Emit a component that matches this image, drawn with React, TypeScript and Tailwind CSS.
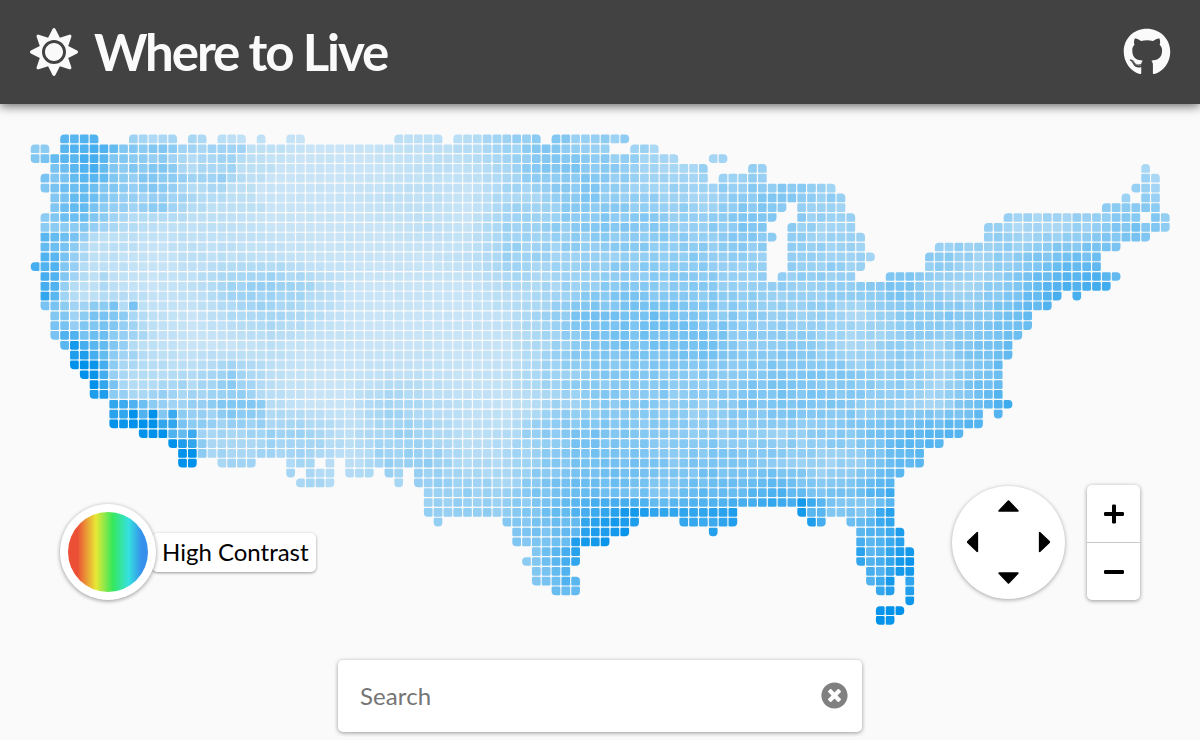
import { FaGithub, FaSun, FaTimesCircle } from "react-icons/fa";

const PITCH = 1140 / 116;
const CELL = 8.7;

/** Column spans that hold land, one entry per grid row. */
const LAND = [
  "3-6 10-14 16-17 19-21 23 26-27 37-41 43-51 53-60",
  "0-1 3-58 61-63",
  "0-65 69-70",
  "2-68 73-74 113",
  "1-68 70-74 113-114",
  "1-81 112-114",
  "2-82 111 113-114",
  "2-76 78-82 109-114",
  "1-75 78-83 99-112 114-115",
  "1-74 77-83 97-115",
  "1-75 77-84 97-113",
  "1-74 77-84 92-110",
  "1-74 77-85 91-108",
  "0-74 77-84 91-108",
  "1-74 76-83 87-110",
  "1-109",
  "1-104 106",
  "1-103",
  "2-101",
  "2-101",
  "2-100",
  "3-99",
  "4-99",
  "4-98",
  "5-98",
  "6-98",
  "6-98",
  "8-99",
  "8-96 98",
  "8-96",
  "11-94",
  "14-92",
  "15-90",
  "15-16 19-22 26-28 30 32-90",
  "26 28-30 32-34 36-37 39-88",
  "27-30 37 39-87",
  "40-87",
  "40-87",
  "40-71 78-87",
  "41 48-61 66-71 79-80 83-87",
  "49-60 69 84-88",
  "49-58 84-88",
  "51-55 84-89",
  "50-55 84-89",
  "51-54 85-89",
  "51-55 85-87 89",
  "53-55 86-87 89",
  "89",
  "86-88",
  "86-87",
];

/** Price samples in base 36 (0 cheapest, k dearest), every 4 columns and 3 rows. */
const SAMPLES = [
  "7c7331100112475533344444444433",
  "8b6631000011377534554444444433",
  "9a5520000110347554675555555655",
  "982111000010456765764444633586",
  "c71011100001445566555456468988",
  "d9101453000023576655568448cdcc",
  "96610242000014889765536769cccc",
  "ad81001000000378896653548acccc",
  "kk62251001101467767876648bcccc",
  "fff5462004210357657876549fffff",
  "iiii634414412687666567accccccc",
  "iiiii43315523688778645aacccccc",
  "iiiii433335548a97aac79ffffffff",
  "iiiii433335568bhgehgcaghhhhhhh",
  "iiiii433335578diiiiiiceiiiiiii",
  "iiiii433335578biiiiiiceiiiiiii",
  "iiiii433335578biiiiiikkkkkkkkk",
  "iiiii433335578biiiiiikkkkkkkkk",
];

/** Exact values where prices change too sharply to interpolate: row, first column, values. */
const EXACT: [number, number, string][] = [
  [0, 3, "bbcc"],
  [1, 0, "66"], [1, 3, "bccdca77677644344441111"],
  [2, 0, "78abbddb7766564323344211"],
  [3, 2, "89bcda76767763233341111"],
  [4, 1, "878abba7657766544453211"],
  [5, 1, "7899a977656765322331110"],
  [6, 2, "78aa97655455443222111"],
  [7, 2, "79aa865545664322111111"],
  [8, 1, "6799976432222221111"],
  [9, 1, "6666754322"],
  [10, 1, "ba985211"],
  [11, 1, "a986311"],
  [12, 1, "cb85311"],
  [13, 0, "dcc75211"],
  [14, 1, "dc7421"],
  [15, 1, "dc5211"],
  [16, 1, "fb421122"],
  [17, 1, "88644668281"],
  [18, 2, "77468876321"],
  [19, 2, "88577875421"],
  [20, 2, "8cc899654"],
  [21, 3, "bidba7521"],
  [22, 4, "hhda6442"],
  [23, 4, "kkjd6332"],
  [24, 5, "kjd53222"],
  [25, 6, "kf832223342"],
  [26, 6, "hh653345434"],
  [27, 8, "fec9654455677776"],
  [28, 8, "gfkck7e655467665"],
  [29, 8, "kjkkkff866545545"],
  [30, 11, "kkkcae434334"],
  [31, 14, "khf63333"],
  [32, 15, "kk634333"],
  [33, 15, "kk"], [33, 19, "3444"],
  [37, 52, "89abcdddddcaabbccccdddefedc"],
  [38, 52, "9aacdefgiihffffffgghhhh"],
  [37, 78, "ieb877779bcih"],
  [38, 78, "ibb77879eg"],
  [39, 56, "fghihh"], [39, 79, "hd"], [39, 83, "9abefg"],
  [40, 56, "ghhij"], [40, 84, "bcceh"],
  [41, 55, "hiij"], [41, 84, "dbceg"],
  [42, 51, "79bdg"], [42, 84, "gbcfhi"],
  [43, 50, "679bdf"], [43, 84, "fcdfij"],
  [44, 51, "78ac"], [44, 85, "dcfii"],
  [45, 51, "789cb"], [45, 85, "cei"],
];

const isLand: boolean[][] = LAND.map((row) => {
  const cells: boolean[] = new Array(116).fill(false);
  row.split(" ").forEach((span) => {
    const [from, to = from] = span.split("-").map(Number);
    cells.fill(true, from, to + 1);
  });
  return cells;
});

const land = (r: number, c: number) => Boolean(isLand[r]?.[c]);

const exact = new Map<string, number>();
EXACT.forEach(([r, c, values]) => {
  [...values].forEach((v, i) => exact.set(`${r},${c + i}`, parseInt(v, 36)));
});

function price(r: number, c: number): number {
  const fixed = exact.get(`${r},${c}`);
  if (fixed !== undefined) return fixed / 20;
  const y = r / 3;
  const x = c / 4;
  const j = Math.floor(y);
  const k = Math.floor(x);
  const at = (jj: number, kk: number) =>
    parseInt(SAMPLES[jj][Math.min(kk, 29)], 36);
  const top = at(j, k) * (1 - (x - k)) + at(j, k + 1) * (x - k);
  const bottom = at(j + 1, k) * (1 - (x - k)) + at(j + 1, k + 1) * (x - k);
  const base = top * (1 - (y - j)) + bottom * (y - j);
  const n = Math.sin(r * 127.1 + c * 311.7) * 43758.5453;
  const noise = (n - Math.floor(n) - 0.5) * Math.min(1.8, 0.3 + base * 0.35);
  return Math.max(0, Math.min(1, (base + noise) / 20));
}

function shade(t: number): string {
  const mix = (a: number, b: number) => Math.round(a + (b - a) * t);
  return `rgb(${mix(200, 0)},${mix(228, 145)},${mix(246, 234)})`;
}

/** A rounded cell; corners on the outline of the country get the larger radius. */
function cellPath(r: number, c: number): string {
  const x = c * PITCH + 0.75;
  const y = r * PITCH + 0.55;
  const n = land(r - 1, c);
  const s = land(r + 1, c);
  const w = land(r, c - 1);
  const e = land(r, c + 1);
  const rad = (a: boolean, b: boolean) => (!a && !b ? 4 : 1.3);
  const tl = rad(n, w);
  const tr = rad(n, e);
  const br = rad(s, e);
  const bl = rad(s, w);
  return (
    `M${x + tl} ${y}H${x + CELL - tr}a${tr} ${tr} 0 0 1 ${tr} ${tr}` +
    `V${y + CELL - br}a${br} ${br} 0 0 1 ${-br} ${br}` +
    `H${x + bl}a${bl} ${bl} 0 0 1 ${-bl} ${-bl}` +
    `V${y + tl}a${tl} ${tl} 0 0 1 ${tl} ${-tl}Z`
  );
}

function PriceMap() {
  return (
    <svg width="1140" height="492" viewBox="0 0 1140 492" className="block">
      {isLand.map((row, r) =>
        row.map((filled, c) =>
          filled ? (
            <path key={`${r}-${c}`} d={cellPath(r, c)} fill={shade(price(r, c))} />
          ) : null,
        ),
      )}
    </svg>
  );
}

function Caret({ className, label }: { className: string; label: string }) {
  return (
    <button aria-label={label} className="flex items-center justify-center">
      <svg width="21" height="12" viewBox="0 0 21 12" className={className}>
        <path d="M10.5 1.2L19.8 10.9H1.2Z" stroke="black" strokeWidth="1.8" strokeLinejoin="round" />
      </svg>
    </button>
  );
}

function PanPad() {
  return (
    <div className="grid size-[113px] grid-cols-[36px_36px_36px] grid-rows-[36px_36px_36px] place-content-center rounded-full bg-white pb-px shadow-[0_1px_4px_rgba(0,0,0,0.35)]">
      <span />
      <Caret label="Up" className="" />
      <span />
      <Caret label="Left" className="-rotate-90" />
      <span />
      <Caret label="Right" className="rotate-90" />
      <span />
      <Caret label="Down" className="rotate-180" />
      <span />
    </div>
  );
}

function ZoomButtons() {
  return (
    <div className="flex h-[115px] w-[53px] flex-col rounded-[5px] bg-white shadow-[0_1px_4px_rgba(0,0,0,0.4)]">
      <button aria-label="Zoom in" className="flex flex-1 items-center justify-center border-b border-[#c8c8c8]">
        <svg width="20" height="20" viewBox="0 0 20 20">
          <rect x="0" y="8" width="20" height="4" rx="1.2" />
          <rect x="8" y="0.5" width="4" height="19" rx="1.2" />
        </svg>
      </button>
      <button aria-label="Zoom out" className="flex flex-1 items-center justify-center">
        <svg width="20" height="20" viewBox="0 0 20 20">
          <rect x="0" y="8" width="20" height="4" rx="1.2" />
        </svg>
      </button>
    </div>
  );
}

function ContrastToggle() {
  return (
    <button className="flex items-center text-black">
      <span className="z-10 size-24 rounded-full bg-white p-2 shadow-[0_1px_4px_rgba(0,0,0,0.4)]">
        <span className="block size-20 rounded-full bg-[linear-gradient(90deg,#eb5036_0%,#eb5036_12%,#e8e835_35%,#35e85c_56%,#35e0e0_76%,#3590eb_92%)]" />
      </span>
      <span className="-ml-1 flex h-[39px] items-center rounded-[5px] bg-white pr-[7px] pl-[10px] text-2xl whitespace-nowrap shadow-[0_1px_3px_rgba(0,0,0,0.4)]">
        High Contrast
      </span>
    </button>
  );
}

export default function App() {
  return (
    <div className="relative flex h-[740px] w-[1200px] flex-col overflow-hidden bg-[#fafafa] font-['Lato',sans-serif]">
      <header className="flex h-[103.5px] shrink-0 items-center justify-between bg-[#424242] pr-[29.5px] pl-[30px] text-[#fafafa] shadow-[0_2px_10px_rgba(0,0,0,0.6)]">
        <div className="flex items-center gap-[16px]">
          <FaSun className="mt-px size-12" />
          <h1 className="pb-px text-[51px] leading-none font-bold tracking-[-2.1px]">Where to Live</h1>
        </div>
        <FaGithub className="mt-px size-12" />
      </header>
      <main className="px-[30px] pt-[30px]">
        <PriceMap />
      </main>
      <div className="absolute top-[504px] left-[60px]">
        <ContrastToggle />
      </div>
      <div className="absolute top-[485px] right-[60px] flex items-start gap-[22px]">
        <div className="pt-px">
          <PanPad />
        </div>
        <ZoomButtons />
      </div>
      <div className="absolute top-[660px] left-[338px] flex h-[72px] w-[524px] items-center rounded-[5px] bg-white pr-[14.5px] pl-[22px] shadow-[0_1px_4px_rgba(0,0,0,0.4)]">
        <input
          placeholder="Search"
          className="min-w-0 flex-1 bg-transparent text-2xl tracking-[0.1px] outline-none placeholder:text-[#757575]"
        />
        <FaTimesCircle className="mb-px size-[27px] text-[#808080]" />
      </div>
    </div>
  );
}
